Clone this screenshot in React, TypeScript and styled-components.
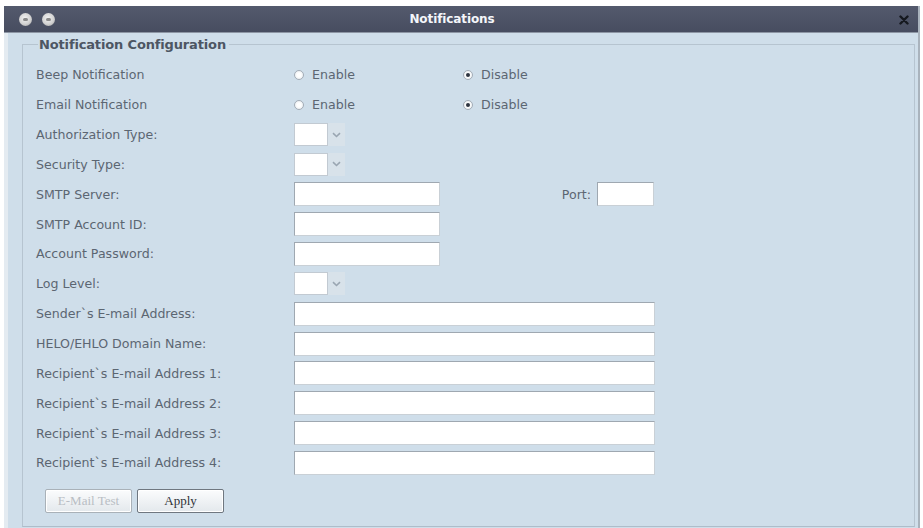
import React from "react";
import styled, { createGlobalStyle } from "styled-components";

const Global = createGlobalStyle`
  html, body { margin: 0; padding: 0; background: #ffffff; }
  body { font-family: "DejaVu Sans", Verdana, sans-serif; }
`;

const Window = styled.div`
  margin: 6px 3px 0 4px;
  width: 916px;
  height: 522px;
  display: flex;
  flex-direction: column;
  background: #cfdeea;
  border-right: 2px solid #a9b3bd;
  box-sizing: border-box;
`;

const TitleBar = styled.div`
  position: relative;
  height: 26px;
  flex: none;
  background: linear-gradient(#545a6d, #474d60);
  border-bottom: 1px solid #8d96a4;
  display: flex;
  align-items: center;
  justify-content: center;
`;

const Title = styled.div`
  color: #f4f6fa;
  font-family: "DejaVu Sans", Verdana, sans-serif;
  font-weight: bold;
  font-size: 12px;
  letter-spacing: -0.1px;
  margin-right: 18px;
`;

const Lights = styled.div`
  position: absolute;
  left: 15px;
  top: 7px;
  display: flex;
  gap: 10px;
`;

const Light = styled.span`
  width: 13px;
  height: 13px;
  border-radius: 50%;
  background: radial-gradient(circle at 45% 40%, #f2f2f2 0%, #d2d2d2 55%, #9a9a9a 100%);
  display: flex;
  align-items: center;
  justify-content: center;
  &::after {
    content: "";
    width: 5px;
    height: 3px;
    border-radius: 2px;
    background: #8a8a8a;
  }
`;

const Close = styled.div`
  position: absolute;
  right: 9px;
  top: 9px;
  width: 10px;
  height: 10px;
  display: flex;
`;

const Body = styled.div`
  flex: 1;
  display: flex;
  border-left: 4px solid #e4ebf1;
  padding: 4px 3px 1px 14px;
`;

const Fieldset = styled.fieldset`
  flex: 1;
  margin: 0;
  border: 1px solid #b6c4d0;
  border-bottom-color: #aebdca;
  padding: 8px 0 0 13px;
  min-width: 0;
`;

const Legend = styled.legend`
  margin-left: 2px;
  padding: 0 3px 0 1px;
  font-family: "DejaVu Sans", Verdana, sans-serif;
  font-weight: bold;
  font-size: 13px;
  line-height: 15px;
  color: #4d5663;
  letter-spacing: -0.15px;
`;

const Row = styled.div`
  height: 29.85px;
  display: grid;
  grid-template-columns: 258px 1fr;
  align-items: center;
`;

const Label = styled.div`
  font-size: 12.6px;
  color: #5c6672;
  white-space: nowrap;
`;

const Cell = styled.div`
  display: flex;
  align-items: center;
`;

const Wide = styled.div`
  width: 360px;
  display: flex;
  align-items: center;
  justify-content: space-between;
`;

const RadioGroup = styled.label`
  width: 169px;
  display: flex;
  align-items: center;
  gap: 8px;
  font-size: 12.6px;
  color: #5c6672;
`;

const RadioDot = styled.span<{ $on?: boolean }>`
  width: 10px;
  height: 10px;
  box-sizing: border-box;
  border-radius: 50%;
  border: 1px solid #a4adb7;
  background: radial-gradient(circle, #ffffff 30%, #e3e8ec 100%);
  display: flex;
  align-items: center;
  justify-content: center;
  &::after {
    content: "";
    width: 4px;
    height: 4px;
    border-radius: 50%;
    background: ${(p) => (p.$on ? "#2d3440" : "transparent")};
  }
`;

const SelectBox = styled.div`
  display: flex;
  height: 23px;
`;

const SelectValue = styled.div`
  width: 34px;
  background: #ffffff;
  border: 1px solid #c2cad2;
  box-sizing: border-box;
`;

const SelectArrow = styled.div`
  width: 17px;
  display: flex;
  align-items: center;
  justify-content: center;
  background: #d8e2ea;
`;

const TextInput = styled.div<{ $w: number }>`
  width: ${(p) => p.$w}px;
  height: 24px;
  background: #ffffff;
  border: 1px solid #9fa8b1;
  border-right-color: #c9d0d6;
  border-bottom-color: #c9d0d6;
  box-sizing: border-box;
`;

const PortGroup = styled.div`
  display: flex;
  align-items: center;
  gap: 6px;
`;

const PortLabel = styled.span`
  font-size: 12.6px;
  color: #5c6672;
`;

const Buttons = styled.div`
  display: flex;
  gap: 5px;
  padding: 11px 0 0 9px;
`;

const Button = styled.button<{ $disabled?: boolean }>`
  height: 24px;
  width: 87px;
  padding: 0;
  font-family: "Liberation Serif", "Times New Roman", serif;
  font-size: 13px;
  color: ${(p) => (p.$disabled ? "#b9bec4" : "#2f3338")};
  background: linear-gradient(#fbfcfd, #e3e8ec);
  border: 1px solid ${(p) => (p.$disabled ? "#a9b1b8" : "#6f7780")};
  border-radius: 2px;
  box-shadow: inset 0 0 0 1px #ffffff;
`;

const Chevron = () => (
  <svg width="9" height="6" viewBox="0 0 9 6">
    <path d="M1 1.2 L4.5 4.5 L8 1.2" fill="none" stroke="#9aa6b2" strokeWidth="1.6" />
  </svg>
);

const Select = () => (
  <SelectBox>
    <SelectValue />
    <SelectArrow>
      <Chevron />
    </SelectArrow>
  </SelectBox>
);

const Radios = () => (
  <Cell>
    <RadioGroup>
      <RadioDot />
      Enable
    </RadioGroup>
    <RadioGroup>
      <RadioDot $on />
      Disable
    </RadioGroup>
  </Cell>
);

const longFields = [
  "Sender`s E-mail Address:",
  "HELO/EHLO Domain Name:",
  "Recipient`s E-mail Address 1:",
  "Recipient`s E-mail Address 2:",
  "Recipient`s E-mail Address 3:",
  "Recipient`s E-mail Address 4:",
];

export default function App() {
  return (
    <>
      <Global />
      <Window>
        <TitleBar>
          <Lights>
            <Light />
            <Light />
          </Lights>
          <Title>Notifications</Title>
          <Close>
            <svg width="10" height="10" viewBox="0 0 10 10">
              <path d="M1.5 1.5 L8.5 8.5 M8.5 1.5 L1.5 8.5" stroke="#15181f" strokeWidth="2.4" strokeLinecap="round" />
            </svg>
          </Close>
        </TitleBar>
        <Body>
          <Fieldset>
            <Legend>Notification Configuration</Legend>
            <Row>
              <Label>Beep Notification</Label>
              <Radios />
            </Row>
            <Row>
              <Label>Email Notification</Label>
              <Radios />
            </Row>
            <Row>
              <Label>Authorization Type:</Label>
              <Cell>
                <Select />
              </Cell>
            </Row>
            <Row>
              <Label>Security Type:</Label>
              <Cell>
                <Select />
              </Cell>
            </Row>
            <Row>
              <Label>SMTP Server:</Label>
              <Cell>
                <Wide>
                  <TextInput $w={146} />
                  <PortGroup>
                    <PortLabel>Port:</PortLabel>
                    <TextInput $w={57} />
                  </PortGroup>
                </Wide>
              </Cell>
            </Row>
            <Row>
              <Label>SMTP Account ID:</Label>
              <Cell>
                <TextInput $w={146} />
              </Cell>
            </Row>
            <Row>
              <Label>Account Password:</Label>
              <Cell>
                <TextInput $w={146} />
              </Cell>
            </Row>
            <Row>
              <Label>Log Level:</Label>
              <Cell>
                <Select />
              </Cell>
            </Row>
            {longFields.map((f) => (
              <Row key={f}>
                <Label>{f}</Label>
                <Cell>
                  <TextInput $w={361} />
                </Cell>
              </Row>
            ))}
            <Buttons>
              <Button $disabled>E-Mail Test</Button>
              <Button>Apply</Button>
            </Buttons>
          </Fieldset>
        </Body>
      </Window>
    </>
  );
}
